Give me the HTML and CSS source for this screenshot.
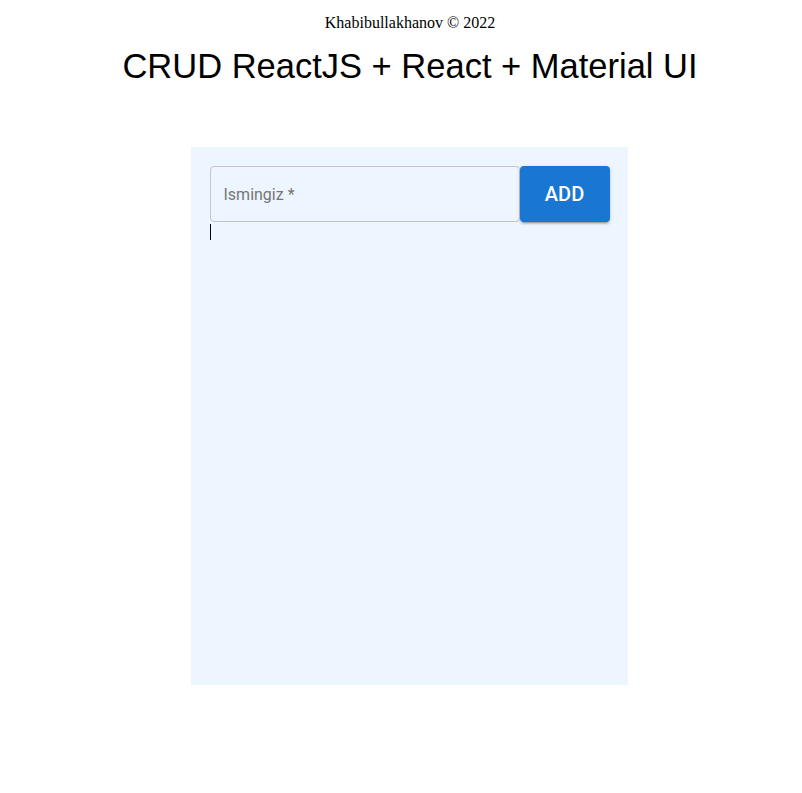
FILE: index.html
```html
<!DOCTYPE html>
<html>
<head>
<meta charset="utf-8">
<link rel="stylesheet" href="styles.css">
</head>
<body>
<div class="page">
  <p class="credit">Khabibullakhanov © 2022</p>
  <h1 class="title">CRUD ReactJS + React + Material UI</h1>
  <div class="panel">
    <form class="row">
      <div class="field"><span class="placeholder">Ismingiz *</span></div>
      <button type="button" class="add">ADD</button>
    </form>
    <div class="caret"></div>
  </div>
</div>
</body>
</html>
```
FILE: styles.css
```css
html, body { margin: 0; padding: 0; background: #fff; }
.page {
  width: 784px;
  margin-left: 17px;
  display: flex;
  flex-direction: column;
  align-items: center;
}
.credit {
  margin: 14px 0 0 2px;
  font-family: "Liberation Serif", serif;
  font-size: 16px;
  line-height: 18px;
  color: #000;
}
.title {
  margin: 14px 0 0 2px;
  font-family: "Liberation Sans", Arial, sans-serif;
  font-weight: 400;
  font-size: 34.5px;
  line-height: 40px;
  color: #000;
}
.panel {
  margin-top: 61px;
  width: 437px;
  height: 538px;
  box-sizing: border-box;
  padding: 19px 18px 19px 19px;
  background: #edf6fe;
}
.row { display: flex; margin: 0; }
.field {
  width: 310px;
  height: 56px;
  box-sizing: border-box;
  border: 1px solid #c4c4c4;
  border-radius: 4px;
  display: flex;
  align-items: center;
  padding-left: 13px;
}
.placeholder {
  font-family: Roboto, sans-serif;
  font-size: 16px;
  color: #757575;
}
.add {
  width: 90px;
  height: 56px;
  border: none;
  border-radius: 4px;
  background: #1976d2;
  color: #fff;
  font-family: Roboto, sans-serif;
  font-weight: 500;
  font-size: 20px;
  box-shadow: 0 3px 1px -2px rgba(0,0,0,.2), 0 2px 2px 0 rgba(0,0,0,.14), 0 1px 5px 0 rgba(0,0,0,.12);
  padding: 0;
}
.caret {
  margin-top: 2px;
  width: 1px;
  height: 16px;
  background: #000;
}
```
